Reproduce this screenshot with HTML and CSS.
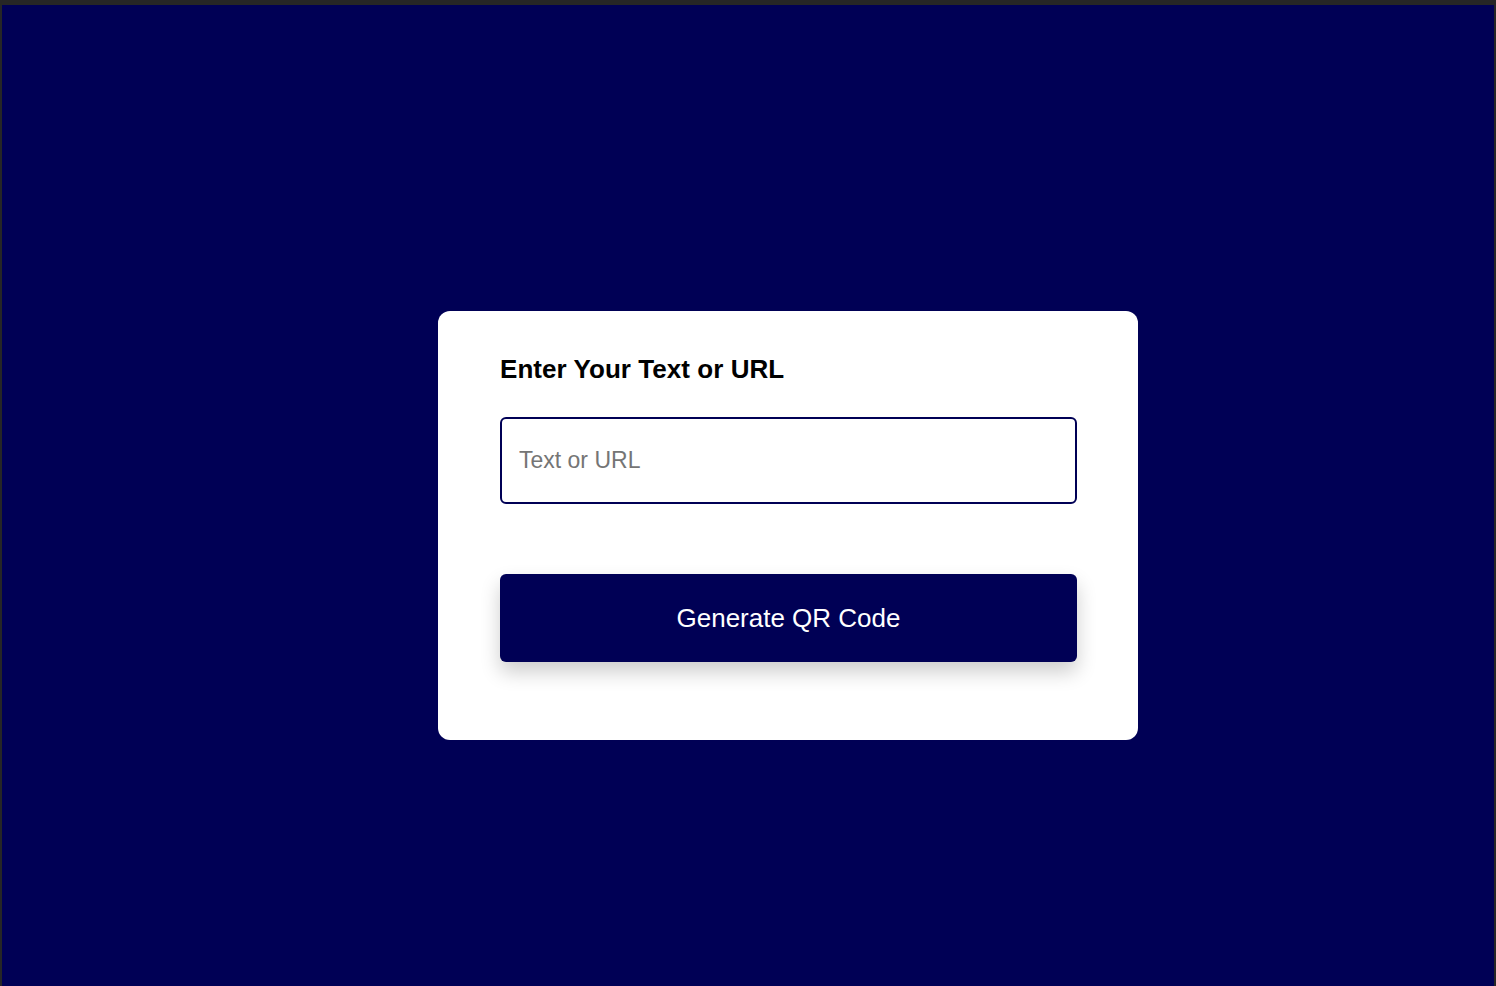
FILE: index.html
```html
<!DOCTYPE html>
<html lang="en">
<head>
<meta charset="UTF-8">
<title>QR Code Generator</title>
<link rel="stylesheet" href="styles.css">
</head>
<body>
<div class="frame">
  <main class="stage">
    <section class="card">
      <h1 class="title">Enter Your Text or URL</h1>
      <input class="field" type="text" placeholder="Text or URL">
      <button class="generate" type="button">Generate QR Code</button>
    </section>
  </main>
</div>
</body>
</html>
```
FILE: styles.css
```css
* { box-sizing: border-box; }
html, body { margin: 0; height: 100%; }
body {
  background: #262626;
  padding: 5px 2px 0 2px;
  font-family: "Liberation Sans", Arial, sans-serif;
}
.frame {
  height: 100%;
  background: #000055;
}
.stage {
  padding: 306px 0 0 436px;
}
.card {
  width: 700px;
  height: 429px;
  background: #ffffff;
  border-radius: 12px;
  padding: 43px 61px 0 62px;
  display: flex;
  flex-direction: column;
}
.title {
  margin: 0;
  font-size: 26px;
  font-weight: 700;
  color: #000000;
  line-height: 30px;
  letter-spacing: 0.05px;
}
.field {
  margin-top: 33px;
  height: 87px;
  width: 577px;
  border: 2px solid #000055;
  border-radius: 6px;
  padding: 0 17px;
  font-family: "Liberation Sans", Arial, sans-serif;
  font-size: 23px;
  color: #222;
  outline: none;
}
.field::placeholder { color: #757575; }
.generate {
  margin-top: 70px;
  height: 88px;
  width: 577px;
  border: none;
  border-radius: 6px;
  background: #000055;
  color: #ffffff;
  font-family: "Liberation Sans", Arial, sans-serif;
  font-size: 26px;
  box-shadow: 0 10px 20px rgba(0, 0, 0, 0.2);
  cursor: pointer;
}
```
